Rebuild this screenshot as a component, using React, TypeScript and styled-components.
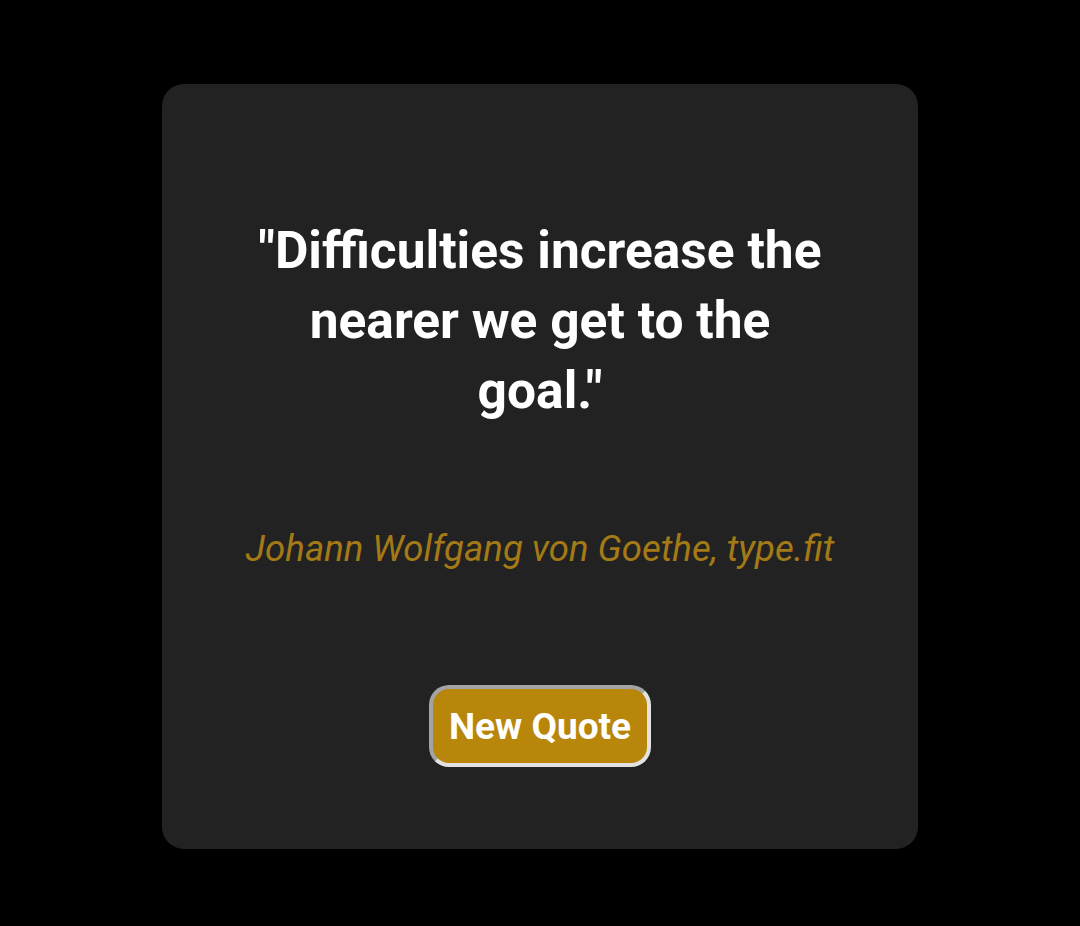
import React from "react";
import styled, { createGlobalStyle } from "styled-components";

const Global = createGlobalStyle`
  html, body { margin: 0; padding: 0; background: #000; }
  body { font-family: Roboto, "Noto Sans", sans-serif; }
`;

const Page = styled.div`
  width: 1080px;
  height: 926px;
  display: flex;
  justify-content: center;
  align-items: flex-start;
  padding-top: 84px;
  box-sizing: border-box;
`;

const Card = styled.div`
  width: 756px;
  height: 765px;
  background: #222222;
  border-radius: 22px;
  display: flex;
  flex-direction: column;
  align-items: center;
  box-sizing: border-box;
  padding-top: 132px;
`;

const Quote = styled.h1`
  margin: 0;
  width: 576px;
  text-align: center;
  color: #ffffff;
  font-family: Roboto, sans-serif;
  font-weight: 700;
  font-size: 51.5px;
  line-height: 70px;
`;

const Author = styled.p`
  margin: 103px 0 0;
  color: #a47a16;
  font-family: Roboto, sans-serif;
  font-style: italic;
  font-size: 36.6px;
  line-height: 40px;
`;

const Button = styled.button`
  margin-top: 116px;
  width: 222px;
  height: 82px;
  border-radius: 20px;
  border: 4px solid;
  border-color: #a3a3a3 #e2e2e2 #e2e2e2 #a3a3a3;
  background: #b8860b;
  color: #ffffff;
  font-family: Roboto, sans-serif;
  font-weight: 700;
  font-size: 37px;
  padding: 0;
`;

export default function App() {
  return (
    <>
      <Global />
      <Page>
        <Card>
          <Quote>"Difficulties increase the nearer we get to the goal."</Quote>
          <Author>Johann Wolfgang von Goethe, type.fit</Author>
          <Button>New Quote</Button>
        </Card>
      </Page>
    </>
  );
}
